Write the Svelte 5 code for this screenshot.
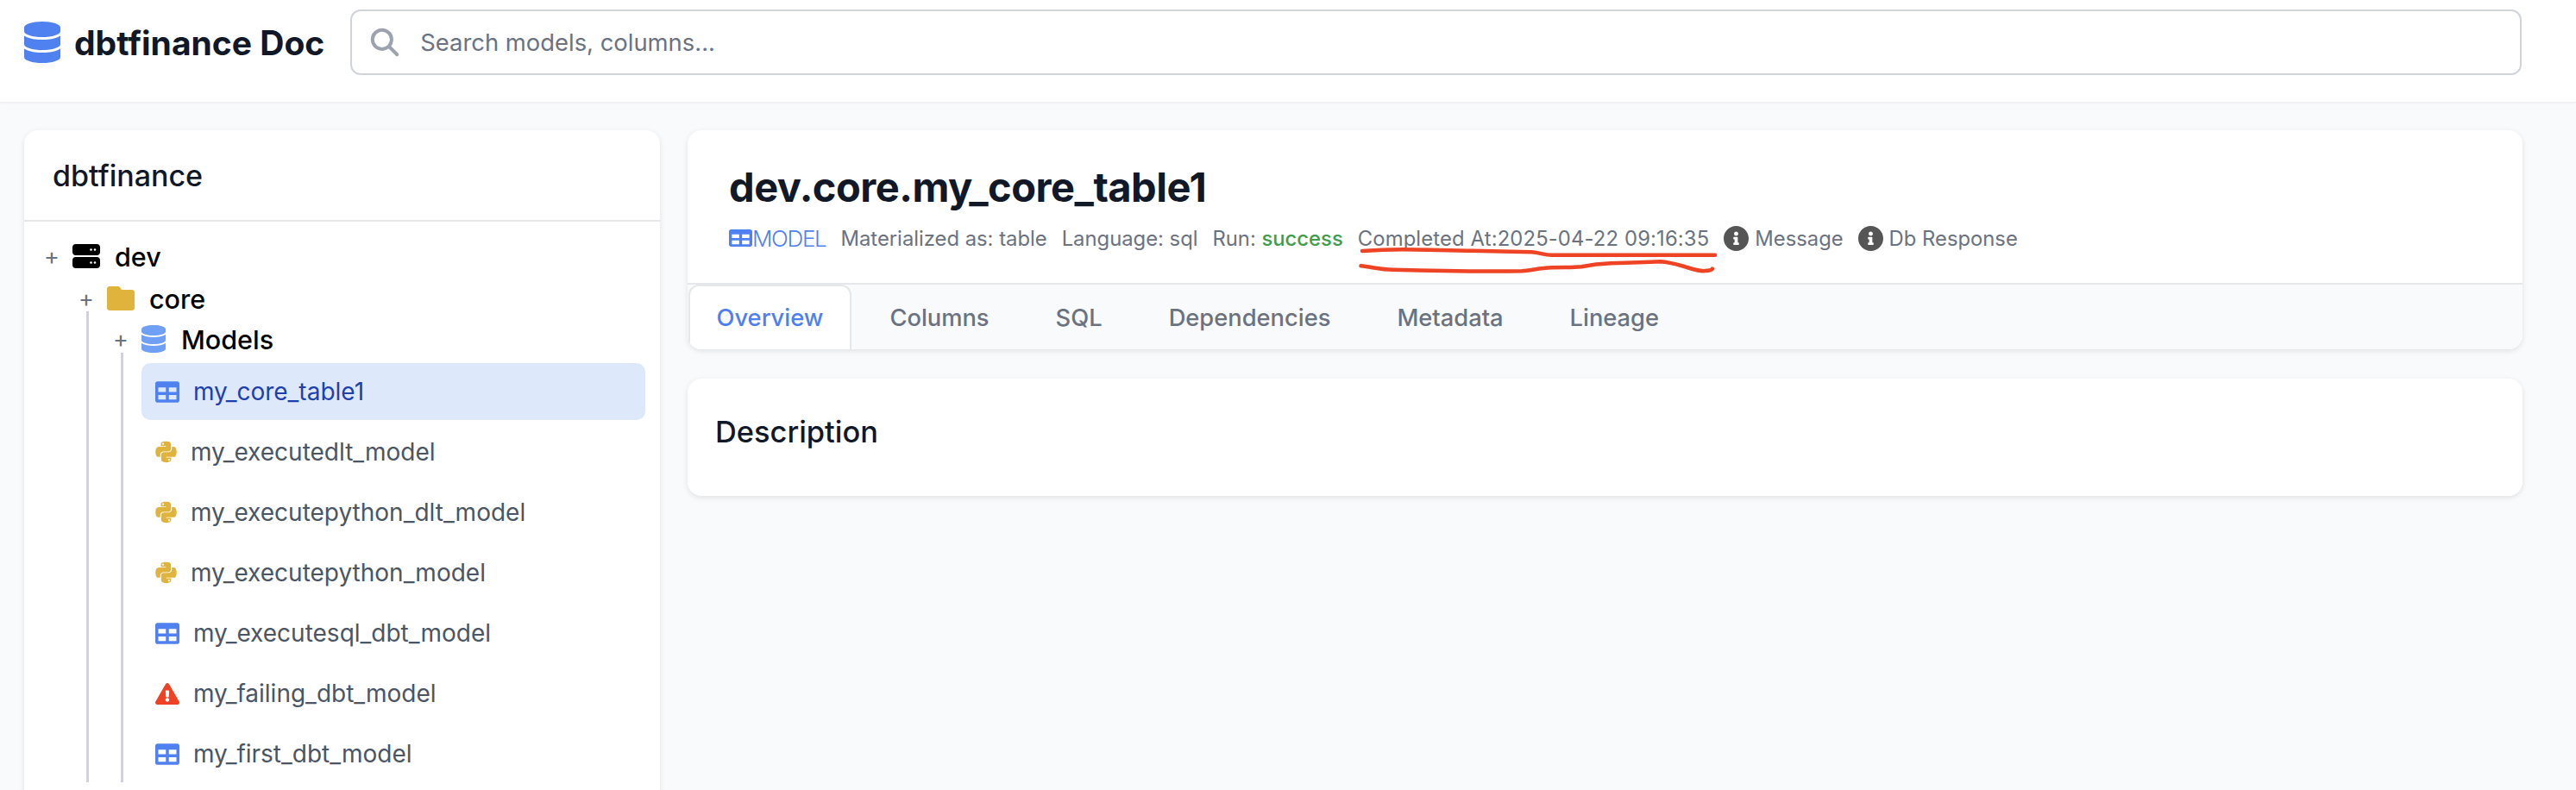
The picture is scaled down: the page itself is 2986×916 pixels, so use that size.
<script>
  const leaves = [
    { name: 'my_core_table1', kind: 'table', active: true },
    { name: 'my_executedlt_model', kind: 'python' },
    { name: 'my_executepython_dlt_model', kind: 'python' },
    { name: 'my_executepython_model', kind: 'python' },
    { name: 'my_executesql_dbt_model', kind: 'table' },
    { name: 'my_failing_dbt_model', kind: 'error' },
    { name: 'my_first_dbt_model', kind: 'table' }
  ];
  const tabs = ['Overview', 'Columns', 'SQL', 'Dependencies', 'Metadata', 'Lineage'];

  const dbPath = 'M448 73.143v45.714C448 159.143 347.667 192 224 192S0 159.143 0 118.857V73.143C0 32.857 100.333 0 224 0s224 32.857 224 73.143zM448 176v102.857C448 319.143 347.667 352 224 352S0 319.143 0 278.857V176c48.125 33.143 136.208 48.572 224 48.572S399.874 209.143 448 176zm0 160v102.857C448 479.143 347.667 512 224 512S0 479.143 0 438.857V336c48.125 33.143 136.208 48.572 224 48.572S399.874 369.143 448 336z';
  const tablePath = 'M464 32H48C21.49 32 0 53.49 0 80v352c0 26.51 21.49 48 48 48h416c26.51 0 48-21.49 48-48V80c0-26.51-21.49-48-48-48zM224 416H64v-96h160v96zm0-160H64v-96h160v96zm224 160H288v-96h160v96zm0-160H288v-96h160v96z';
  const pythonPath = 'M439.8 200.5c-7.7-30.9-22.3-54.2-53.4-54.2h-40.1v47.4c0 36.8-31.2 67.8-66.8 67.8H172.7c-29.2 0-53.4 25-53.4 54.3v101.8c0 29 25.2 46 53.4 54.3 33.8 9.9 66.3 11.7 106.8 0 26.9-7.8 53.4-23.5 53.4-54.3v-40.7H226.2v-13.6h160.2c31.1 0 42.6-21.7 53.4-54.2 11.2-33.5 10.7-65.7 0-108.6zM286.2 404c11.1 0 20.1 9.1 20.1 20.3 0 11.3-9 20.4-20.1 20.4-11 0-20.1-9.2-20.1-20.4.1-11.3 9.1-20.3 20.1-20.3zM167.8 248.1h106.8c29.7 0 53.4-24.5 53.4-54.3V91.9c0-29-24.4-50.7-53.4-55.6-35.8-5.9-74.7-5.6-106.8.1-45.2 8-53.4 24.7-53.4 55.6v40.7h106.9v13.6h-147c-31.1 0-58.3 18.7-66.8 54.2-9.8 40.7-10.2 66.1 0 108.6 7.6 31.6 25.7 54.2 56.8 54.2H101v-48.8c0-35.3 30.5-66.4 66.8-66.4zm-6.7-142.6c-11.1 0-20.1-9.1-20.1-20.3.1-11.3 9-20.4 20.1-20.4 11 0 20.1 9.2 20.1 20.4s-9 20.3-20.1 20.3z';
  const warnPath = 'M569.517 440.013C587.975 472.007 564.806 512 527.94 512H48.054c-36.937 0-59.999-40.055-41.577-71.987L246.423 24.035c18.467-32.009 64.72-31.951 83.154 0l239.94 416.028zM288 354c-25.405 0-46 20.595-46 46s20.595 46 46 46 46-20.595 46-46-20.595-46-46-46zm-43.673-165.346l7.418 136c.347 6.364 5.609 11.346 11.982 11.346h48.546c6.373 0 11.635-4.982 11.982-11.346l7.418-136c.375-6.874-5.098-12.654-11.982-12.654h-63.383c-6.884 0-12.356 5.78-11.981 12.654z';
  const infoPath = 'M256 8C119.043 8 8 119.083 8 256c0 136.997 111.043 248 248 248s248-111.003 248-248C504 119.083 392.957 8 256 8zm0 110c23.196 0 42 18.804 42 42s-18.804 42-42 42-42-18.804-42-42 18.804-42 42-42zm56 254c0 6.627-5.373 12-12 12h-88c-6.627 0-12-5.373-12-12v-24c0-6.627 5.373-12 12-12h12v-64h-12c-6.627 0-12-5.373-12-12v-24c0-6.627 5.373-12 12-12h64c6.627 0 12 5.373 12 12v100h12c6.627 0 12 5.373 12 12v24z';
</script>

<div class="page">
  <header class="topbar">
    <div class="brand">
      <svg class="brand-icon" viewBox="0 0 448 512"><path d={dbPath} /></svg>
      <span>dbtfinance Doc</span>
    </div>
    <div class="search">
      <svg class="search-icon" viewBox="0 0 24 24" fill="none" stroke-width="2.5" stroke-linecap="round" stroke-linejoin="round">
        <path d="M21 21l-6-6m2-5a7 7 0 11-14 0 7 7 0 0114 0z" />
      </svg>
      <span>Search models, columns...</span>
    </div>
  </header>

  <main class="layout">
    <aside class="card sidebar">
      <h2 class="project">dbtfinance</h2>
      <ul class="tree">
        <li>
          <div class="node node-dev">
            <span class="toggle">+</span>
            <svg class="server-icon" viewBox="0 0 32 28">
              <rect width="32" height="13" rx="4" />
              <rect y="15" width="32" height="13" rx="4" />
              <g fill="#fff">
                <circle cx="21.5" cy="6.5" r="1.3" /><circle cx="26" cy="6.5" r="1.3" />
                <circle cx="21.5" cy="21.5" r="1.3" /><circle cx="26" cy="21.5" r="1.3" />
              </g>
            </svg>
            <span>dev</span>
          </div>
          <ul class="nested">
            <li class="core">
              <div class="node node-core">
                <span class="toggle">+</span>
                <svg class="folder-icon" viewBox="0 0 512 448" preserveAspectRatio="none">
                  <path d="M464 64H272l-32-48C232 5 222 0 208 0H48C21.49 0 0 21.49 0 48v352c0 26.51 21.49 48 48 48h416c26.51 0 48-21.49 48-48V112c0-26.51-21.49-48-48-48z" />
                </svg>
                <span>core</span>
              </div>
              <ul class="branch">
                <li class="models">
                  <div class="node node-models">
                    <span class="toggle">+</span>
                    <svg class="models-icon" viewBox="0 0 448 512"><path d={dbPath} /></svg>
                    <span>Models</span>
                  </div>
                  <ul class="branch leaves">
                    {#each leaves as leaf}
                      <li class="leaf" class:active={leaf.active}>
                        {#if leaf.kind === 'table'}
                          <svg class="leaf-icon table" viewBox="0 0 512 448"><path transform="translate(0 -32)" d={tablePath} /></svg>
                        {:else if leaf.kind === 'python'}
                          <svg class="leaf-icon python" viewBox="0 0 448 512"><path d={pythonPath} /></svg>
                        {:else}
                          <svg class="leaf-icon warn" viewBox="0 0 576 512"><path d={warnPath} /></svg>
                        {/if}
                        <span>{leaf.name}</span>
                      </li>
                    {/each}
                  </ul>
                </li>
              </ul>
            </li>
          </ul>
        </li>
      </ul>
    </aside>

    <section class="content">
      <div class="card detail">
        <div class="detail-head">
          <h1>dev.core.my_core_table1</h1>
          <div class="meta">
            <span class="model-tag">
              <svg viewBox="0 0 512 448" preserveAspectRatio="none"><path transform="translate(0 -32)" d={tablePath} /></svg>
              <span>MODEL</span>
            </span>
            <span>Materialized as: table</span>
            <span>Language: sql</span>
            <span>Run: <b class="ok">success</b></span>
            <span class="completed">Completed At:2025-04-22 09:16:35</span>
            <span class="info"><svg viewBox="8 8 496 496"><path d={infoPath} /></svg>Message</span>
            <span class="info"><svg viewBox="8 8 496 496"><path d={infoPath} /></svg>Db Response</span>
          </div>
        </div>
        <nav class="tabs">
          {#each tabs as tab, i}
            <span class="tab" class:selected={i === 0}>{tab}</span>
          {/each}
        </nav>
      </div>

      <div class="card description">
        <h3>Description</h3>
      </div>
    </section>
  </main>

  <!-- hand-drawn marks on top of the screenshot -->
  <svg class="scribble" viewBox="1570 284 425 36" fill="none">
    <path d="M1579 291C1600 289.500 1610 289.300 1626 289.300C1650 289.600 1680 290.300 1701 290.700C1730 291.200 1760 291.800 1775.500 292.300C1785 293 1790 295.700 1798.500 295.700L1902 295.700L1988 295.700" />
    <path d="M1577.500 308.300C1590 309.500 1600 312.700 1615 312.700C1660 314 1720 314.800 1764 314.300C1775 313.500 1785 310.800 1798.500 310.300C1815 309.800 1822 310.300 1833 309.300C1845 307 1855 305.800 1867 305.300C1890 304.800 1912 304 1925 303.300C1935 304 1945 307 1953.500 309.300C1962 312 1970 315 1976.500 314C1981 314 1984 313.500 1985 311.700" />
  </svg>
</div>

<style>
  :global(body) {
    margin: 0;
    background: #f9fafb;
  }

  .page {
    position: relative;
    height: 916px;
    overflow: hidden;
    font-family: Inter, 'Noto Sans', sans-serif;
    color: #111827;
    background: #f9fafb;
  }

  .topbar {
    box-sizing: border-box;
    height: 119px;
    display: flex;
    align-items: flex-start;
    gap: 30px;
    padding: 11px 63px 0 28px;
    background: #fff;
    border-bottom: 1px solid #eceef1;
    box-shadow: 0 1px 3px rgba(0, 0, 0, 0.03);
  }

  .brand {
    display: flex;
    align-items: center;
    gap: 16px;
    height: 76px;
    font-size: 39px;
    font-weight: 700;
    white-space: nowrap;
  }

  .brand-icon {
    width: 42px;
    height: 48px;
    fill: #4f82f0;
  }

  .search {
    flex: 1;
    box-sizing: border-box;
    height: 76px;
    display: flex;
    align-items: center;
    gap: 22px;
    padding-left: 19px;
    border: 2px solid #d1d5db;
    border-radius: 12px;
    font-size: 27.4px;
    color: #6b7280;
  }

  .search-icon {
    width: 38px;
    height: 38px;
    stroke: #9ca3af;
  }

  .layout {
    display: grid;
    grid-template-columns: 737px 2127px;
    gap: 32px;
    padding: 32px 28px 0;
  }

  .card {
    background: #fff;
    border-radius: 16px;
    box-shadow: 0 2px 6px rgba(0, 0, 0, 0.1);
  }

  .sidebar {
    height: 800px;
  }

  .project {
    box-sizing: border-box;
    height: 106px;
    margin: 0;
    padding: 0 33px;
    display: flex;
    align-items: center;
    font-size: 34px;
    font-weight: 500;
    border-bottom: 2px solid #e5e7eb;
  }

  .tree,
  .nested,
  .branch {
    list-style: none;
    margin: 0;
    padding: 0;
  }

  .tree {
    padding: 26px 0 0 22px;
  }

  .node {
    display: flex;
    align-items: center;
    font-size: 30.5px;
    font-weight: 500;
    color: #000;
    white-space: nowrap;
  }

  .toggle {
    width: 20px;
    margin-right: 14px;
    text-align: center;
    font-size: 27px;
    font-weight: 400;
    color: #6b7280;
  }

  .node-dev {
    height: 28px;
  }

  .node-core {
    height: 30px;
  }

  .node-models {
    height: 32px;
  }

  .nested {
    padding-left: 40px;
  }

  .core {
    padding-top: 20px;
  }

  .branch {
    margin-left: 10px;
    padding-left: 27px;
    border-left: 3px solid #d1d2dc;
  }

  .models {
    padding-top: 16px;
  }

  .server-icon {
    width: 32px;
    height: 28px;
    margin-right: 17px;
    fill: #000;
  }

  .folder-icon {
    width: 32px;
    height: 28px;
    margin-right: 17px;
    fill: #e0b43c;
  }

  .models-icon {
    width: 28px;
    height: 32px;
    margin-right: 18px;
    fill: #6fa0f5;
  }

  .leaves {
    display: flex;
    flex-direction: column;
    gap: 4px;
    padding: 12px 0 0 21px;
    width: 584px;
  }

  .leaf {
    box-sizing: border-box;
    height: 66px;
    display: flex;
    align-items: center;
    gap: 16px;
    padding-left: 16px;
    border-radius: 10px;
    font-size: 28px;
    color: #4b5563;
    white-space: nowrap;
  }

  .leaf.active {
    background: #dde8fb;
    color: #1e40af;
  }

  .leaf-icon {
    flex-shrink: 0;
  }

  .table {
    width: 28px;
    height: 25px;
    fill: #4f82f0;
  }

  .python {
    width: 25px;
    height: 28px;
    fill: #e0b43c;
  }

  .warn {
    width: 28px;
    height: 25px;
    fill: #ef4123;
  }

  .content {
    display: flex;
    flex-direction: column;
    gap: 34px;
  }

  .detail {
    overflow: hidden;
  }

  .detail-head {
    box-sizing: border-box;
    height: 179px;
    padding: 40px 48px 0;
    border-bottom: 2px solid #e5e7eb;
  }

  h1 {
    margin: 0;
    height: 52px;
    line-height: 52px;
    font-size: 47px;
    font-weight: 700;
    letter-spacing: -0.5px;
  }

  .meta {
    display: flex;
    align-items: center;
    gap: 17px;
    height: 28px;
    margin-top: 19px;
    font-size: 23.8px;
    color: #6b7280;
    white-space: nowrap;
  }

  .model-tag {
    display: flex;
    align-items: center;
    color: #4f82f0;
    font-size: 26px;
    font-weight: 300;
    letter-spacing: -1.3px;
  }

  .model-tag svg {
    width: 27px;
    height: 20px;
    fill: #4f82f0;
  }

  .ok {
    font-weight: 500;
    color: #3f9d4e;
  }

  .completed {
    letter-spacing: 0.15px;
  }

  .info {
    display: flex;
    align-items: center;
    gap: 7px;
  }

  .info svg {
    width: 29px;
    height: 29px;
    fill: #555;
  }

  .tabs {
    display: flex;
    gap: 12px;
    height: 75px;
    padding-left: 1px;
    background: #f9fafb;
  }

  .tab {
    box-sizing: border-box;
    height: 75px;
    display: flex;
    align-items: center;
    padding: 0 30.5px;
    border: 2px solid transparent;
    border-bottom: 0;
    border-radius: 12px 12px 0 0;
    font-size: 27.3px;
    font-weight: 500;
    color: #6b7280;
  }

  .tab.selected {
    background: #fff;
    color: #4f7ff0;
    border-color: #e5e7eb;
  }

  .description {
    box-sizing: border-box;
    height: 136px;
    padding: 0 32px 14px;
    display: flex;
    align-items: center;
  }

  h3 {
    margin: 0;
    font-size: 34.4px;
    font-weight: 500;
  }

  .scribble {
    position: absolute;
    left: 1570px;
    top: 284px;
    width: 425px;
    height: 36px;
    stroke: #ee4325;
    stroke-width: 4.5;
    stroke-linecap: round;
    stroke-linejoin: round;
  }
</style>
